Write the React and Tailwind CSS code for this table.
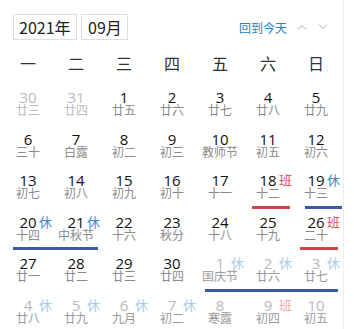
const weeks = [
  [
    { d: 30, l: '廿三', m: 'prev' },
    { d: 31, l: '廿四', m: 'prev' },
    { d: 1, l: '廿五' },
    { d: 2, l: '廿六' },
    { d: 3, l: '廿七' },
    { d: 4, l: '廿八' },
    { d: 5, l: '廿九' },
  ],
  [
    { d: 6, l: '三十' },
    { d: 7, l: '白露' },
    { d: 8, l: '初二' },
    { d: 9, l: '初三' },
    { d: 10, l: '教师节' },
    { d: 11, l: '初五' },
    { d: 12, l: '初六' },
  ],
  [
    { d: 13, l: '初七' },
    { d: 14, l: '初八' },
    { d: 15, l: '初九' },
    { d: 16, l: '初十' },
    { d: 17, l: '十一' },
    { d: 18, l: '十二', tag: 'work', bar: 'red-single' },
    { d: 19, l: '十三', tag: 'rest', bar: 'blue-single' },
  ],
  [
    { d: 20, l: '十四', tag: 'rest', bar: 'blue-start' },
    { d: 21, l: '中秋节', tag: 'rest', bar: 'blue-end' },
    { d: 22, l: '十六' },
    { d: 23, l: '秋分' },
    { d: 24, l: '十八' },
    { d: 25, l: '十九' },
    { d: 26, l: '二十', tag: 'work', bar: 'red-single' },
  ],
  [
    { d: 27, l: '廿一' },
    { d: 28, l: '廿二' },
    { d: 29, l: '廿三' },
    { d: 30, l: '廿四' },
    { d: 1, l: '国庆节', m: 'next', tag: 'rest', bar: 'blue-start' },
    { d: 2, l: '廿六', m: 'next', tag: 'rest', bar: 'blue-mid' },
    { d: 3, l: '廿七', m: 'next', tag: 'rest', bar: 'blue-end' },
  ],
  [
    { d: 4, l: '廿八', m: 'next', tag: 'rest' },
    { d: 5, l: '廿九', m: 'next', tag: 'rest' },
    { d: 6, l: '九月', m: 'next', tag: 'rest' },
    { d: 7, l: '初二', m: 'next', tag: 'rest' },
    { d: 8, l: '寒露', m: 'next' },
    { d: 9, l: '初四', m: 'next', tag: 'work' },
    { d: 10, l: '初五', m: 'next' },
  ],
]

const barClass = {
  'red-single': 'left-[8px] right-[2px] bg-[#d4434a]',
  'blue-single': 'left-[13px] right-[-2px] bg-[#3c5aa6]',
  'blue-start': 'left-[9px] right-0 bg-[#3c5aa6]',
  'blue-mid': 'left-0 right-0 bg-[#3c5aa6]',
  'blue-end': 'left-0 right-[2px] bg-[#3c5aa6]',
}

function Cell({ day }) {
  const other = day.m === 'prev' || day.m === 'next'
  const numColor = other ? 'text-[#b9b9b9]' : 'text-[#111]'
  const lunarColor =
    day.m === 'prev' ? 'text-[#bcbcbc]' : day.m === 'next' ? 'text-[#9a9a9a]' : 'text-[#8a8a8a]'
  const tagColor =
    day.tag === 'rest'
      ? other
        ? 'text-[#a9c9e6]'
        : 'text-[#3b87c7]'
      : other
        ? 'text-[#f1a9a9]'
        : 'text-[#d9534f]'

  return (
    <div className="relative h-[41.6px] pt-[3px] flex flex-col items-center">
      <div className={`font-['Open_Sans',sans-serif] text-[15px] leading-[12px] h-[12px] ${numColor}`}>
        {day.d}
      </div>
      {day.tag && (
        <span
          className={`absolute top-[3px] left-[calc(50%+11px)] text-[13px] leading-[12px] ${tagColor}`}
        >
          {day.tag === 'rest' ? '休' : '班'}
        </span>
      )}
      <div className={`mt-[1px] text-[12px] leading-[12px] whitespace-nowrap ${lunarColor}`}>
        {day.l}
      </div>
      {day.bar && <div className={`absolute bottom-[4px] h-[3px] ${barClass[day.bar]}`} />}
    </div>
  )
}

export default function App() {
  return (
    <div className="w-[354px] h-[329px] overflow-hidden bg-white font-['Noto_Sans_CJK_SC',sans-serif]">
      <div className="w-[344px] h-full border-r border-[#eeeeee]">
        <div className="flex items-center pt-[13px] pl-[13px] pr-[15px]">
          <div className="w-[64px] h-[26px] border border-[#dddddd] pl-[5px] text-[16px] leading-[24px] text-[#222]">
            2021年
          </div>
          <div className="ml-[4px] w-[47px] h-[26px] border border-[#dddddd] pl-[6px] text-[16px] leading-[24px] text-[#222]">
            09月
          </div>
          <div className="ml-auto flex items-center">
            <span className="text-[12px] leading-[26px] text-[#2a80c2] pt-[2px]">回到今天</span>
            <svg className="ml-[10px]" width="10" height="6" viewBox="0 0 10 6">
              <path d="M1 5.5 L5 1.5 L9 5.5" fill="none" stroke="#a8a8a8" strokeWidth="1" />
            </svg>
            <svg className="ml-[11px]" width="10" height="6" viewBox="0 0 10 6">
              <path d="M1 0.5 L5 4.5 L9 0.5" fill="none" stroke="#a8a8a8" strokeWidth="1" />
            </svg>
          </div>
        </div>

        <div className="grid grid-cols-7 w-[336px] ml-[4px] mt-[7px] h-[30px] items-center text-[16px] text-[#333] text-center">
          {['一', '二', '三', '四', '五', '六', '日'].map((w) => (
            <div key={w}>{w}</div>
          ))}
        </div>

        <div className="grid grid-cols-7 w-[336px] ml-[4px] mt-[10px]">
          {weeks.flat().map((day, i) => (
            <Cell key={i} day={day} />
          ))}
        </div>
      </div>
    </div>
  )
}
